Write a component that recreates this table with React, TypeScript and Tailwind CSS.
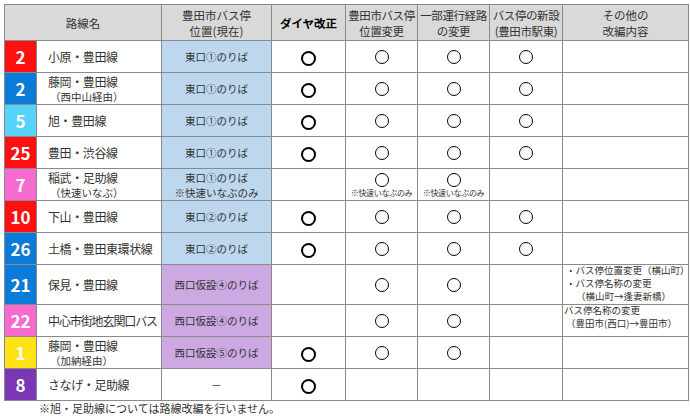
const FONT = { fontFamily: '"Noto Sans CJK JP", "Noto Sans", sans-serif' };

type Row = {
  no: string;
  color: string;
  name: string;
  tight?: boolean;
  sub?: string;
  stop: string;
  stopNote?: string;
  stopBg: string;
  dia?: boolean;
  pos?: boolean;
  posNote?: boolean;
  route?: boolean;
  routeNote?: boolean;
  newStop?: boolean;
  other?: "yokoyama" | "toyotashi";
  h: string;
};

const BLUE = "bg-[#bdd7ee]";
const PURPLE = "bg-[#cca9e2]";

const rows: Row[] = [
  { no: "2", color: "bg-[#ff0f0f]", name: "小原・豊田線", stop: "東口①のりば", stopBg: BLUE, dia: true, pos: true, route: true, newStop: true, h: "h-[32px]" },
  { no: "2", color: "bg-[#0a7bd6]", name: "藤岡・豊田線", sub: "（西中山経由）", stop: "東口①のりば", stopBg: BLUE, dia: true, pos: true, route: true, newStop: true, h: "h-[32px]" },
  { no: "5", color: "bg-[#56d2fb]", name: "旭・豊田線", stop: "東口①のりば", stopBg: BLUE, dia: true, pos: true, route: true, newStop: true, h: "h-[32px]" },
  { no: "25", color: "bg-[#ff0f0f]", name: "豊田・渋谷線", stop: "東口①のりば", stopBg: BLUE, dia: true, pos: true, route: true, newStop: true, h: "h-[32px]" },
  { no: "7", color: "bg-[#f66bd0]", name: "稲武・足助線", sub: "（快速いなぶ）", stop: "東口①のりば", stopNote: "※快速いなぶのみ", stopBg: BLUE, pos: true, posNote: true, route: true, routeNote: true, h: "h-[32px]" },
  { no: "10", color: "bg-[#ff0f0f]", name: "下山・豊田線", stop: "東口②のりば", stopBg: BLUE, dia: true, pos: true, route: true, newStop: true, h: "h-[32px]" },
  { no: "26", color: "bg-[#0a7bd6]", name: "土橋・豊田東環状線", stop: "東口②のりば", stopBg: BLUE, dia: true, pos: true, route: true, newStop: true, h: "h-[32px]" },
  { no: "21", color: "bg-[#0a7bd6]", name: "保見・豊田線", stop: "西口仮設④のりば", stopBg: PURPLE, pos: true, route: true, other: "yokoyama", h: "h-[40px]" },
  { no: "22", color: "bg-[#f66bd0]", name: "中心市街地玄関口バス", tight: true, stop: "西口仮設④のりば", stopBg: PURPLE, pos: true, route: true, other: "toyotashi", h: "h-[32px]" },
  { no: "1", color: "bg-[#ffe415]", name: "藤岡・豊田線", sub: "（加納経由）", stop: "西口仮設⑤のりば", stopBg: PURPLE, dia: true, pos: true, route: true, h: "h-[32px]" },
  { no: "8", color: "bg-[#7a36b5]", name: "さなげ・足助線", stop: "－", stopBg: "bg-white", dia: true, h: "h-[32px]" },
];

function Circle({ bold }: { bold?: boolean }) {
  return (
    <span
      className={`inline-block rounded-full border-black align-middle ${
        bold ? "w-[15px] h-[15px] border-2" : "w-[14px] h-[14px] border-[1.5px]"
      }`}
    />
  );
}

function MarkCell({ on, note }: { on?: boolean; note?: boolean }) {
  return (
    <td className="border border-[#8a8a8a] text-center align-middle p-0">
      {on && (
        <div className="flex flex-col items-center leading-none">
          <Circle />
          {note && (
            <span className="text-[8px] text-[#333] mt-[2px] tracking-[-0.3px] whitespace-nowrap">※快速いなぶのみ</span>
          )}
        </div>
      )}
    </td>
  );
}

function Other({ kind }: { kind?: Row["other"] }) {
  if (kind === "yokoyama") {
    return (
      <div className="text-[9.5px] leading-[13px] text-[#333] pl-[3px] -mt-[2px] whitespace-nowrap">
        <div>・バス停位置変更（横山町）</div>
        <div>・バス停名称の変更</div>
        <div className="pl-[10px]">（横山町→逢妻新橋）</div>
      </div>
    );
  }
  if (kind === "toyotashi") {
    return (
      <div className="text-[9.5px] leading-[13px] text-[#333] pl-[1px] -mt-[8px] whitespace-nowrap">
        <div>バス停名称の変更</div>
        <div className="pl-[2px]">（豊田市(西口)→豊田市）</div>
      </div>
    );
  }
  return null;
}

export default function App() {
  return (
    <div className="w-[690px] h-[416px] bg-white pt-[4px] pl-[4px] overflow-hidden" style={FONT}>
      <table className="border-collapse table-fixed w-[684px] border border-[#7a7a7a]">
        <colgroup>
          <col className="w-[32px]" />
          <col className="w-[125px]" />
          <col className="w-[110px]" />
          <col className="w-[74px]" />
          <col className="w-[72px]" />
          <col className="w-[72px]" />
          <col className="w-[73px]" />
          <col className="w-[126px]" />
        </colgroup>
        <thead>
          <tr className="h-[36px] bg-[#d9d9d9] text-[11.5px] leading-[16px] text-[#333]">
            <th colSpan={2} className="border border-[#8a8a8a] font-normal p-0">路線名</th>
            <th className="border border-[#8a8a8a] font-normal p-0">豊田市バス停<br />位置(現在)</th>
            <th className="border border-[#8a8a8a] font-bold text-black p-0">ダイヤ改正</th>
            <th className="border border-[#8a8a8a] font-normal tracking-[-0.4px] whitespace-nowrap p-0">豊田市バス停<br />位置変更</th>
            <th className="border border-[#8a8a8a] font-normal tracking-[-0.4px] whitespace-nowrap p-0">一部運行経路<br />の変更</th>
            <th className="border border-[#8a8a8a] font-normal tracking-[-0.4px] whitespace-nowrap p-0">バス停の新設<br />(豊田市駅東)</th>
            <th className="border border-[#8a8a8a] font-normal p-0">その他の<br />改編内容</th>
          </tr>
        </thead>
        <tbody>
          {rows.map((r, i) => (
            <tr key={i} className={r.h}>
              <td className={`${r.color} border border-[#8a8a8a] text-center text-white font-bold text-[17px] leading-none p-0`}>{r.no}</td>
              <td className="border border-[#8a8a8a] pl-[11px] text-[#333] p-0 leading-[15px] whitespace-nowrap">
                <div className={`text-[12px] ${r.tight ? "tracking-[-1.1px]" : "tracking-[-0.4px]"}`}>{r.name}</div>
                {r.sub && <div className="text-[10.5px] pl-[2px]">{r.sub}</div>}
              </td>
              <td className={`${r.stopBg} border border-[#8a8a8a] text-center text-[10.5px] leading-[15px] text-[#333] p-0 whitespace-nowrap`}>
                <div>{r.stop}</div>
                {r.stopNote && <div>{r.stopNote}</div>}
              </td>
              <td className="border border-[#8a8a8a] text-center p-0 leading-none">{r.dia && <Circle bold />}</td>
              <MarkCell on={r.pos} note={r.posNote} />
              <MarkCell on={r.route} note={r.routeNote} />
              <MarkCell on={r.newStop} />
              <td className="border border-[#8a8a8a] p-0 align-middle">
                <Other kind={r.other} />
              </td>
            </tr>
          ))}
        </tbody>
      </table>
      <div className="text-[11px] leading-[12px] text-[#333] pl-[35px] mt-[1px] whitespace-nowrap">※旭・足助線については路線改編を行いません。</div>
    </div>
  );
}
